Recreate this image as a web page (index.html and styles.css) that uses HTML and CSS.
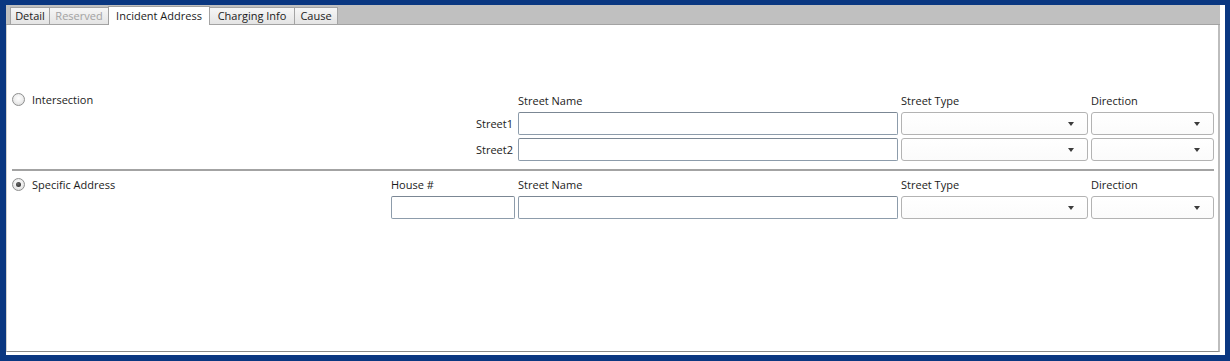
FILE: index.html
```html
<!DOCTYPE html>
<html>
<head>
<meta charset="utf-8">
<link rel="stylesheet" href="styles.css">
</head>
<body>
<div class="frame">
  <div class="tabstrip">
    <div class="tab t-detail">Detail</div>
    <div class="tab t-reserved disabled">Reserved</div>
    <div class="tab t-incident selected">Incident Address</div>
    <div class="tab t-charging">Charging Info</div>
    <div class="tab t-cause">Cause</div>
  </div>
  <div class="panel">
    <div class="section sec-intersection">
      <div class="radio-item"><span class="radio"></span><span class="radio-text">Intersection</span></div>
      <div class="hdr c3">Street Name</div>
      <div class="hdr c4">Street Type</div>
      <div class="hdr c5">Direction</div>

      <div class="rowlabel c2 r2">Street1</div>
      <div class="textbox c3 r2"></div>
      <div class="combo c4 r2"><span class="arrow"></span></div>
      <div class="combo c5 r2"><span class="arrow"></span></div>

      <div class="rowlabel c2 r3">Street2</div>
      <div class="textbox c3 r3"></div>
      <div class="combo c4 r3"><span class="arrow"></span></div>
      <div class="combo c5 r3"><span class="arrow"></span></div>
    </div>
    <div class="separator"></div>
    <div class="section sec-specific">
      <div class="radio-item"><span class="radio checked"></span><span class="radio-text">Specific Address</span></div>
      <div class="hdr c2">House #</div>
      <div class="hdr c3">Street Name</div>
      <div class="hdr c4">Street Type</div>
      <div class="hdr c5">Direction</div>

      <div class="textbox c2 r2"></div>
      <div class="textbox c3 r2"></div>
      <div class="combo c4 r2"><span class="arrow"></span></div>
      <div class="combo c5 r2"><span class="arrow"></span></div>
    </div>
  </div>
</div>
</body>
</html>
```
FILE: styles.css
```css
html, body {
  margin: 0;
  padding: 0;
}
body {
  background: #0a3781;
  width: 1230px;
  height: 361px;
  overflow: hidden;
  font-family: "Open Sans", "Noto Sans", sans-serif;
  font-size: 11px;
  color: #1b1b1b;
}
.frame {
  margin: 5px 5px 6px 6px;
  height: 350px;
  background: #ffffff;
  padding: 0 5px 3px 0;
  box-sizing: border-box;
  display: flex;
  flex-direction: column;
}
.tabstrip {
  height: 20px;
  background: #c0c0c0;
  border-bottom: 1px solid #a3a3a3;
  box-sizing: border-box;
  display: flex;
  align-items: flex-end;
  padding-left: 4px;
}
.tab {
  height: 17px;
  box-sizing: border-box;
  border: 1px solid #a4a4a4;
  border-bottom: none;
  background: linear-gradient(#f6f6f6, #e4e4e4);
  display: flex;
  align-items: center;
  justify-content: center;
  margin-left: -1px;
  line-height: 14px;
  white-space: nowrap;
}
.t-detail { width: 40px; margin-left: 0; }
.t-reserved { width: 60px; }
.t-incident { width: 102px; }
.t-charging { width: 86px; }
.t-cause { width: 44px; }
.tab.disabled { color: #a2a2a2; }
.tab.selected {
  height: 19px;
  margin-bottom: -1px;
  background: #ffffff;
  border-color: #a0a0a0;
}
.panel {
  flex: 1;
  border-left: 1px solid #cfcfcf;
  border-right: 2px solid #bdbdbd;
  border-bottom: 1px solid #8a8a8a;
  padding: 67px 4px 0 5px;
  box-sizing: border-box;
}
.section {
  display: grid;
  grid-template-columns: 376px 124px 380px 187px 123px;
  column-gap: 3px;
  row-gap: 3px;
  grid-template-rows: 17px 23px 23px;
}
.sec-specific {
  grid-template-rows: 17px 23px;
  margin-top: 5px;
}
.radio-item {
  grid-column: 1;
  grid-row: 1;
  display: flex;
  align-items: center;
  margin-top: -2px;
}
.sec-specific .radio-item { margin-top: -1px; }
.radio {
  width: 13px;
  height: 13px;
  box-sizing: border-box;
  border-radius: 50%;
  border: 1px solid #8e8f8f;
  background: radial-gradient(circle at 50% 40%, #ffffff 0%, #f0f0f0 45%, #d4d4d4 100%);
  display: flex;
  align-items: center;
  justify-content: center;
  margin-right: 7px;
}
.radio.checked::after {
  content: "";
  width: 5px;
  height: 5px;
  border-radius: 50%;
  background: radial-gradient(circle at 40% 35%, #6a6a6a, #1e1e1e);
}
.hdr {
  grid-row: 1;
  display: flex;
  align-items: center;
  white-space: nowrap;
}
.c2 { grid-column: 2; }
.c3 { grid-column: 3; }
.c4 { grid-column: 4; }
.c5 { grid-column: 5; }
.r2 { grid-row: 2; }
.r3 { grid-row: 3; }
.rowlabel {
  display: flex;
  align-items: center;
  justify-content: flex-end;
  padding-right: 2px;
}
.textbox {
  border: 1px solid #8d9cab;
  border-top-color: #7b8794;
  border-radius: 2px;
  background: #ffffff;
}
.combo {
  border: 1px solid #b3b3b3;
  border-radius: 3px;
  background: linear-gradient(#ffffff, #fbfbfb);
  display: flex;
  align-items: center;
  justify-content: flex-end;
  padding-right: 13px;
}
.arrow {
  width: 0;
  height: 0;
  border-left: 3px solid transparent;
  border-right: 3px solid transparent;
  border-top: 4px solid #3c3c3c;
}
.separator {
  height: 2px;
  background: #a3a3a3;
  margin-top: 8px;
}
```
